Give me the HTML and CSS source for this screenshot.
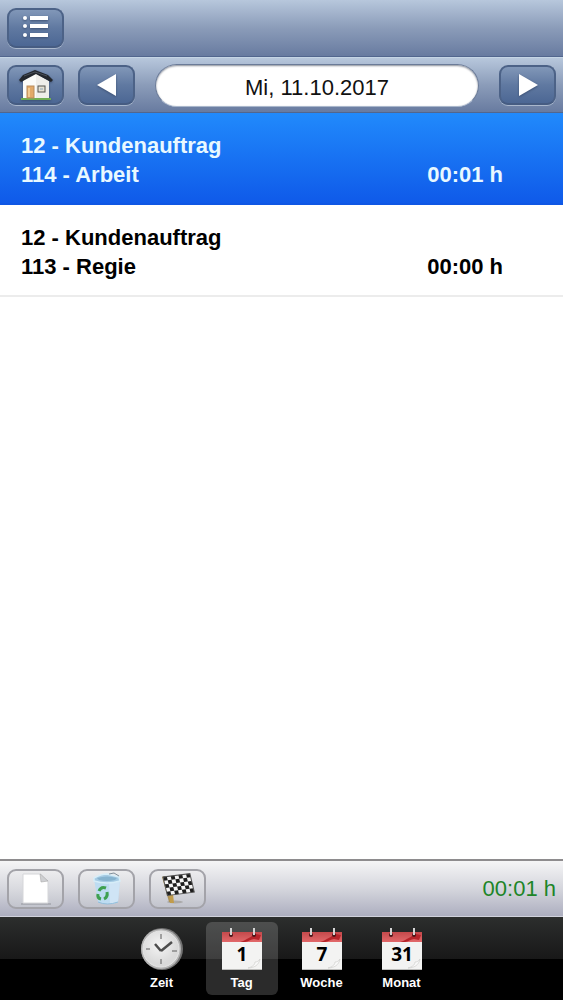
FILE: index.html
```html
<!DOCTYPE html>
<html lang="de">
<head>
    <meta charset="UTF-8">
    <meta name="viewport" content="width=device-width, initial-scale=1.0">
    <title>Zeiterfassung - Tag</title>
    <link rel="stylesheet" href="styles.css">
</head>
<body>
    <!-- Gemeinsames Kalenderblatt -->
    <svg class="defs" width="0" height="0" aria-hidden="true">
        <defs>
            <linearGradient id="kopf" x1="0" y1="0" x2="0" y2="1">
                <stop offset="0" stop-color="#c4494b"/>
                <stop offset="1" stop-color="#e2686a"/>
            </linearGradient>
            <symbol id="kalender" viewBox="0 0 44 44">
                <rect x="2" y="5" width="40" height="38" fill="#f3f3f2"/>
                <rect x="2" y="5" width="40" height="10" fill="url(#kopf)"/>
                <path d="M20 15C27 13 31 9 36 7l5 1-2 5-5-1c-3 0-6 3-9 3z" fill="#b52329"/>
                <path d="M28 41c6 0 11-3 12-9-1 2-3 3-5 3 0 3-3 5-7 6z" fill="#fafafa" stroke="#cfcfcc" stroke-width=".7"/>
                <circle cx="11" cy="8" r="2" fill="#4a1719"/>
                <circle cx="34" cy="8" r="2" fill="#4a1719"/>
                <path d="M11 1v7M34 1v7" stroke="#d5d5d5" stroke-width="2"/>
                <path d="M2 42.500h40" stroke="#bcbcba"/>
            </symbol>
        </defs>
    </svg>

    <header>
        <div class="toolbar">
            <button class="btn" type="button" aria-label="Menü">
                <svg width="28" height="28" viewBox="0 0 28 28" fill="#fff">
                    <circle cx="3" cy="4" r="2"/><rect x="8" y="2" width="18" height="4"/>
                    <circle cx="3" cy="12" r="2"/><rect x="8" y="10" width="18" height="4"/>
                    <circle cx="3" cy="21" r="2"/><rect x="8" y="19" width="18" height="4"/>
                </svg>
            </button>
        </div>
        <div class="toolbar">
            <button class="btn" type="button" aria-label="Start">
                <svg width="36" height="34" viewBox="0 0 36 34">
                    <path d="M5 13L17 5l14 8v18H5z" fill="#efeeea"/>
                    <path d="M5 13L17 5l1 1v25H5z" fill="#fbfbf8"/>
                    <path d="M3 31h30" stroke="#6fae53" stroke-width="2"/>
                    <rect x="9" y="18" width="7" height="12" fill="#e2a968" stroke="#b98c5b"/>
                    <path d="M11 20v9" stroke="#f1ca91" stroke-width="2"/>
                    <rect x="20" y="18" width="7" height="6" fill="#e4e0d3" stroke="#55554f"/>
                    <path d="M22 20h3v2h-3z" fill="#b9c3c6"/>
                    <path d="M1 12L5 7l12-5 13 5 5 5-2 2L18 6 3 14z" fill="#23272d"/>
                    <path d="M6 8l11-4 12 4" fill="none" stroke="#4a5058"/>
                </svg>
            </button>
            <button class="btn" type="button" aria-label="Vorheriger Tag">
                <svg width="20" height="24" viewBox="0 0 20 24"><path d="M0 12L19 1v22z" fill="#fff"/></svg>
            </button>
            <input class="date" type="text" value="Mi, 11.10.2017" aria-label="Datum" readonly>
            <button class="btn" type="button" aria-label="Nächster Tag">
                <svg width="20" height="24" viewBox="0 0 20 24"><path d="M20 12L1 1v22z" fill="#fff"/></svg>
            </button>
        </div>
    </header>

    <main>
        <ul class="list">
            <li class="row selected">
                <div>12 - Kundenauftrag</div>
                <div class="line"><span>114 - Arbeit</span><span>00:01 h</span></div>
            </li>
            <li class="row">
                <div>12 - Kundenauftrag</div>
                <div class="line"><span>113 - Regie</span><span>00:00 h</span></div>
            </li>
        </ul>
    </main>

    <div class="actions">
        <button class="btn light" type="button" aria-label="Neu">
            <svg width="34" height="34" viewBox="0 0 34 34">
                <path d="M2 32h30" stroke="#92959b" stroke-width="1"/>
                <path d="M4 2h18l7 7v22H4z" fill="#fff" stroke="#d5d6d9"/>
                <path d="M21 2l8 7-7 1z" fill="#cfd0d3" stroke="#aaa" stroke-width=".6"/>
            </svg>
        </button>
        <button class="btn light" type="button" aria-label="Löschen">
            <svg width="34" height="34" viewBox="0 0 34 34">
                <path d="M4 7l4 23q9 4 20 0l2-23z" fill="#bddcf1"/>
                <path d="M19 9l11-2-2 23q-4 2-8 2z" fill="#cfe4f5"/>
                <path d="M4 6q7-4 13-4l12 3 1 4q-13 4-26 0z" fill="#a5cbe4" stroke="#d6edf8" stroke-width="1.500"/>
                <path d="M7 6q10-3 20 0l-2 2q-8 2-16 0z" fill="#86b3cf"/>
                <path d="M19 2l5-1 5 3" fill="none" stroke="#81909b"/>
                <path d="M9 19q2-5 7-3M17 20q1 5-3 7M11 27q-4-1-3-5" fill="none" stroke="#3fa050" stroke-width="3"/>
                <path d="M8 30q9 4 20 0" fill="none" stroke="#91bedb"/>
            </svg>
        </button>
        <button class="btn light" type="button" aria-label="Beenden">
            <svg width="34" height="34" viewBox="0 0 34 34">
                <ellipse cx="14" cy="30" rx="8" ry="1.500" fill="#aaa"/>
                <path d="M1 5l7 25h4L4 4z" fill="#aa9157"/>
                <path d="M8 22l1 9h4l-1-9z" fill="#c19c4b"/>
                <g transform="matrix(.96 -.12 .22 .92 2 5)">
                    <path d="M0 0h28v20H0z" fill="#f5f5f5"/>
                    <path d="M0 0h4v4H0zM8 0h4v4H8zM16 0h4v4h-4zM24 0h4v4h-4zM4 4h4v4H4zM12 4h4v4h-4zM20 4h4v4h-4zM0 8h4v4H0zM8 8h4v4H8zM16 8h4v4h-4zM24 8h4v4h-4zM4 12h4v4H4zM12 12h4v4h-4zM20 12h4v4h-4zM0 16h4v4H0zM8 16h4v4H8zM16 16h4v4h-4zM24 16h4v4h-4z" fill="#1d1d1d"/>
                    <path d="M0 0h28v20H0z" fill="none" stroke="#555"/>
                </g>
            </svg>
        </button>
        <span class="total">00:01 h</span>
    </div>

    <nav class="tabs">
        <a class="tab" href="#zeit">
            <svg width="44" height="44" viewBox="0 0 44 44">
                <defs>
                    <radialGradient id="uhr" cx=".45" cy=".4">
                        <stop offset="0" stop-color="#f4f4f4"/>
                        <stop offset="1" stop-color="#dadada"/>
                    </radialGradient>
                </defs>
                <circle cx="22" cy="22" r="21" fill="#727272"/>
                <circle cx="21" cy="22" r="20" fill="#b5b5b5"/>
                <circle cx="21" cy="22" r="18" fill="url(#uhr)" stroke="#e6e6e6"/>
                <path d="M21 7v5M21 32v5M6 22h4M32 24h5" stroke="#888" stroke-width="1.500"/>
                <path d="M21 24L32 15M21 24l-6-7" stroke="#4d4d4d" stroke-width="2.500"/>
            </svg>
            Zeit
        </a>
        <a class="tab active" href="#tag">
            <svg width="44" height="44" viewBox="0 0 44 44"><use href="#kalender"/><text class="num" x="22" y="34">1</text></svg>
            Tag
        </a>
        <a class="tab" href="#woche">
            <svg width="44" height="44" viewBox="0 0 44 44"><use href="#kalender"/><text class="num" x="22" y="34">7</text></svg>
            Woche
        </a>
        <a class="tab" href="#monat">
            <svg width="44" height="44" viewBox="0 0 44 44"><use href="#kalender"/><text class="num" x="22" y="34">31</text></svg>
            Monat
        </a>
    </nav>
</body>
</html>
```
FILE: styles.css
```css
* {
    box-sizing: border-box;
}
body {
    margin: 0;
    min-height: 100vh;
    display: flex;
    flex-direction: column;
    background-color: #fff;
    color: #000;
    font-family: "Liberation Sans", Helvetica, Arial, sans-serif;
    font-size: 22px;
}
.defs {
    position: absolute;
}
.toolbar {
    display: flex;
    align-items: center;
    gap: 14px;
    height: 57px;
    padding: 0 7px;
    background: linear-gradient(#b7c7dc, #8b9cb9 50%, #687ba0);
    border-bottom: 1px solid #52668e;
}
.toolbar + .toolbar {
    height: 56px;
    border-top: 1px solid #c5d5e5;
}
.btn {
    display: flex;
    align-items: center;
    justify-content: center;
    width: 57px;
    height: 40px;
    padding: 0;
    border: 2px solid #4c6287;
    border-bottom-color: #465c82;
    border-radius: 9px;
    background: linear-gradient(#8197b8, #6079a1 50%, #4c6794);
    box-shadow: 0 1px 0 #a9b7cc;
    cursor: pointer;
}
.toolbar svg {
    filter: drop-shadow(0 1px 1px #3c5073);
}
.date {
    flex: 1;
    min-width: 0;
    height: 43px;
    margin: 0 6px;
    padding: 5px 0 0;
    border: 1px solid #6b7b98;
    border-bottom-color: #a9b7cc;
    border-radius: 22px;
    background-color: #fff;
    box-shadow: inset 0 1px 2px #8a8f99;
    color: #111;
    font: inherit;
    text-align: center;
}
main {
    flex: 1;
}
.list {
    margin: 0;
    padding: 0;
    list-style: none;
}
.row {
    padding: 18px 60px 14px 21px;
    border-bottom: 2px solid #ececec;
    line-height: 29px;
    font-weight: bold;
}
.row.selected {
    background: linear-gradient(#218afc, #0f5ae9);
    border-bottom-color: #0f57e4;
    color: #e8f8ff;
}
.line {
    display: flex;
    justify-content: space-between;
}
.actions {
    display: flex;
    align-items: center;
    gap: 14px;
    height: 58px;
    padding: 0 7px;
    border-top: 2px solid #8e8c8e;
    border-bottom: 1px solid #d0d2dc;
    background: linear-gradient(#f5f5f6, #d5d6dd 50%, #acaebf);
}
.btn.light {
    border: 2px solid #a3a3a9;
    background: linear-gradient(#ececee, #d9dadf 50%, #c2c4cd);
    box-shadow: none;
}
.total {
    margin-left: auto;
    color: #1d8528;
}
.tabs {
    display: flex;
    justify-content: center;
    align-items: flex-start;
    gap: 8px;
    height: 83px;
    padding-top: 5px;
    background: linear-gradient(#2c2e2d, #181818 42px, #000 42px);
}
.tab {
    display: flex;
    flex-direction: column;
    align-items: center;
    gap: 4px;
    width: 72px;
    height: 73px;
    padding-top: 5px;
    border-radius: 6px;
    color: #fff;
    font-size: 13px;
    font-weight: bold;
    line-height: 16px;
    text-decoration: none;
}
.tab.active {
    background-color: rgba(255, 255, 255, 0.17);
}
.num {
    fill: #000;
    font-family: "Open Sans", sans-serif;
    font-size: 19px;
    font-weight: bold;
    text-anchor: middle;
}
```
